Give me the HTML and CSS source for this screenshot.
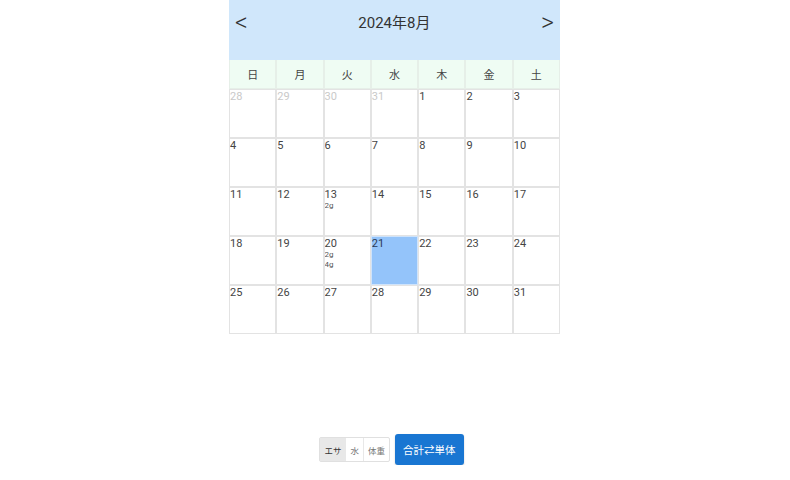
FILE: index.html
```html
<!DOCTYPE html>
<html lang="ja">
<head>
<meta charset="utf-8">
<link rel="stylesheet" href="styles.css">
</head>
<body>
<div class="page">
  <div class="calendar">
    <div class="cal-header">
      <span class="nav">&lt;</span>
      <span class="title">2024年8月</span>
      <span class="nav">&gt;</span>
    </div>
    <div class="weekdays">
      <div class="wd">日</div><div class="wd">月</div><div class="wd">火</div><div class="wd">水</div><div class="wd">木</div><div class="wd">金</div><div class="wd">土</div>
    </div>
    <div class="days">
      <div class="day other"><span class="num">28</span></div>
      <div class="day other"><span class="num">29</span></div>
      <div class="day other"><span class="num">30</span></div>
      <div class="day other"><span class="num">31</span></div>
      <div class="day"><span class="num">1</span></div>
      <div class="day"><span class="num">2</span></div>
      <div class="day"><span class="num">3</span></div>

      <div class="day"><span class="num">4</span></div>
      <div class="day"><span class="num">5</span></div>
      <div class="day"><span class="num">6</span></div>
      <div class="day"><span class="num">7</span></div>
      <div class="day"><span class="num">8</span></div>
      <div class="day"><span class="num">9</span></div>
      <div class="day"><span class="num">10</span></div>

      <div class="day"><span class="num">11</span></div>
      <div class="day"><span class="num">12</span></div>
      <div class="day"><span class="num">13</span><span class="rec">2g</span></div>
      <div class="day"><span class="num">14</span></div>
      <div class="day"><span class="num">15</span></div>
      <div class="day"><span class="num">16</span></div>
      <div class="day"><span class="num">17</span></div>

      <div class="day"><span class="num">18</span></div>
      <div class="day"><span class="num">19</span></div>
      <div class="day"><span class="num">20</span><span class="rec">2g</span><span class="rec">4g</span></div>
      <div class="day selected"><span class="num">21</span></div>
      <div class="day"><span class="num">22</span></div>
      <div class="day"><span class="num">23</span></div>
      <div class="day"><span class="num">24</span></div>

      <div class="day"><span class="num">25</span></div>
      <div class="day"><span class="num">26</span></div>
      <div class="day"><span class="num">27</span></div>
      <div class="day"><span class="num">28</span></div>
      <div class="day"><span class="num">29</span></div>
      <div class="day"><span class="num">30</span></div>
      <div class="day"><span class="num">31</span></div>
    </div>
  </div>
  <div class="controls">
    <div class="toggle">
      <span class="opt active">エサ</span>
      <span class="opt">水</span>
      <span class="opt">体重</span>
    </div>
    <button class="switch">合計⇄単体</button>
  </div>
</div>
</body>
</html>
```
FILE: styles.css
```css
html, body {
  margin: 0;
  padding: 0;
  background: #ffffff;
}
body {
  font-family: Roboto, "Noto Sans CJK JP", sans-serif;
  color: #333;
}
.page {
  display: flex;
  flex-direction: column;
  align-items: center;
}
.calendar {
  width: 331px;
  height: 434px;
  margin-right: 1px;
}
.cal-header {
  height: 60px;
  background: #d0e7fb;
  display: flex;
  justify-content: space-between;
  align-items: flex-start;
  padding: 8px 6px 0 6px;
  box-sizing: border-box;
}
.nav {
  font-size: 25px;
  line-height: 30px;
  color: #333;
  font-weight: 300;
}
.title {
  font-size: 15px;
  line-height: 30px;
  color: #333;
}
.weekdays {
  display: grid;
  grid-template-columns: repeat(7, 1fr);
  background: #effcf3;
  height: 29px;
}
.wd {
  border: 1px solid #e6efe8;
  border-top: none;
  font-size: 11px;
  display: flex;
  align-items: center;
  justify-content: center;
  color: #444;
}
.days {
  display: grid;
  grid-template-columns: repeat(7, 1fr);
  grid-auto-rows: 49px;
}
.day {
  border: 1px solid #e3e3e3;
  display: flex;
  flex-direction: column;
  align-items: flex-start;
  padding: 0;
  overflow: hidden;
}
.num {
  font-size: 11px;
  line-height: 13px;
  color: #444;
}
.day.other .num {
  color: #c9c9c9;
}
.day.selected {
  background: #94c4fa;
  border-color: #cfe3fa;
}
.day.selected .num {
  color: #2b3a55;
}
.rec {
  font-size: 8px;
  line-height: 10px;
  color: #555;
}
.rec:first-of-type {
  margin-top: 2px;
}
.controls {
  display: flex;
  align-items: center;
  gap: 5px;
  margin-right: 7px;
}
.toggle {
  display: flex;
  border: 1px solid #e0e0e0;
  border-radius: 2px;
  height: 23px;
}
.opt {
  font-size: 8.5px;
  color: #777;
  display: flex;
  align-items: center;
  justify-content: center;
  padding: 0 4px;
  border-left: 1px solid #e8e8e8;
}
.opt:first-child {
  border-left: none;
}
.opt.active {
  background: #e8e8e8;
  color: #333;
}
.switch {
  height: 31px;
  padding: 0 8px;
  background: #1976d2;
  color: #fff;
  border: none;
  border-radius: 3px;
  font-family: Roboto, "Noto Sans CJK JP", sans-serif;
  font-size: 10.5px;
  box-shadow: 0 1px 2px rgba(0,0,0,0.2);
}
```
